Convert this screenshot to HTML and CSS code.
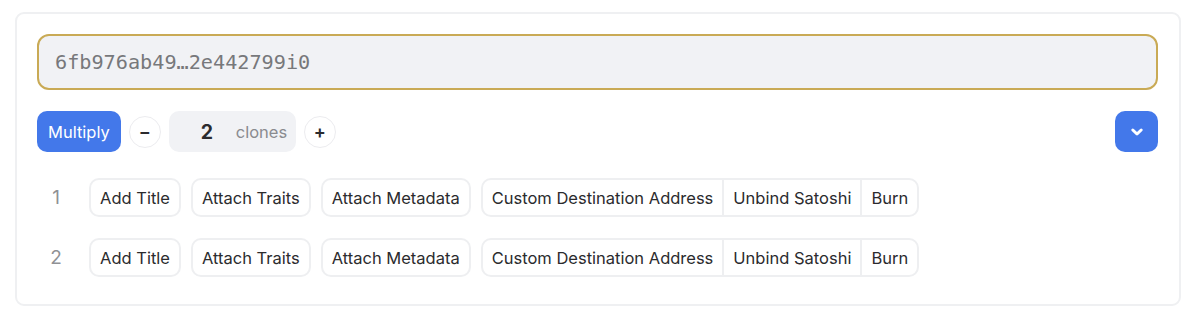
FILE: index.html
```html
<!DOCTYPE html>
<html lang="en">
<head>
    <meta charset="UTF-8">
    <meta name="viewport" content="width=device-width, initial-scale=1.0">
    <title>Multiply</title>
    <link rel="stylesheet" href="styles.css">
</head>
<body>
    <div class="card">
        <div class="id-input">6fb976ab49…2e442799i0</div>

        <div class="toolbar">
            <button class="btn-primary">Multiply</button>
            <button class="round-btn">&minus;</button>
            <div class="count-box">
                <span class="count">2</span>
                <span class="count-label">clones</span>
            </div>
            <button class="round-btn">+</button>
            <button class="btn-primary btn-toggle">
                <svg width="16" height="16" viewBox="0 0 16 16"><path d="M3.8 6 L8 10 L12.2 6" fill="none" stroke="#fff" stroke-width="3" stroke-linecap="round" stroke-linejoin="round"/></svg>
            </button>
        </div>

        <div class="clone-row">
            <span class="clone-num">1</span>
            <span class="chip">Add Title</span>
            <span class="chip">Attach Traits</span>
            <span class="chip">Attach Metadata</span>
            <span class="chip-group">
                <span class="chip-part">Custom Destination Address</span>
                <span class="chip-part">Unbind Satoshi</span>
                <span class="chip-part">Burn</span>
            </span>
        </div>

        <div class="clone-row">
            <span class="clone-num">2</span>
            <span class="chip">Add Title</span>
            <span class="chip">Attach Traits</span>
            <span class="chip">Attach Metadata</span>
            <span class="chip-group">
                <span class="chip-part">Custom Destination Address</span>
                <span class="chip-part">Unbind Satoshi</span>
                <span class="chip-part">Burn</span>
            </span>
        </div>
    </div>
</body>
</html>
```

FILE: styles.css
```css
body {
    margin: 0;
    background: #fff;
    font-family: Inter, "Noto Sans", sans-serif;
    color: #2b2b2e;
}
.card {
    margin: 12px 19px 0 15px;
    border: 2px solid #eff0f2;
    border-radius: 9px;
    padding: 20px 21px 27px 20px;
}
.id-input {
    height: 52px;
    border: 2px solid #c9aa55;
    border-radius: 12px;
    background: #f1f2f5;
    font-family: "DejaVu Sans Mono", monospace;
    font-size: 20.2px;
    color: #77787b;
    line-height: 52px;
    padding-left: 16px;
}
.toolbar {
    display: flex;
    align-items: center;
    gap: 8px;
    margin-top: 21px;
}
.btn-primary {
    height: 41px;
    padding: 0 11px;
    border: none;
    border-radius: 10px;
    background: #4378ea;
    color: #fff;
    font-family: Inter, sans-serif;
    font-size: 16.5px;
    cursor: pointer;
}
.btn-toggle {
    margin-left: auto;
    width: 43px;
    padding: 0;
    display: flex;
    align-items: center;
    justify-content: center;
}
.round-btn {
    width: 32px;
    height: 32px;
    border-radius: 50%;
    border: 1px solid #ececef;
    background: #fff;
    color: #2b2b2e;
    font-family: Inter, sans-serif;
    font-size: 18px;
    font-weight: 600;
    padding: 0;
    line-height: 28px;
}
.count-box {
    width: 127px;
    height: 41px;
    box-sizing: border-box;
    border-radius: 10px;
    background: #f1f2f5;
    display: flex;
    align-items: center;
    padding-left: 32px;
}
.count {
    font-size: 19.5px;
    font-weight: 700;
    width: 35px;
}
.count-label {
    font-size: 16.5px;
    color: #8a8b8f;
}
.clone-row {
    display: flex;
    align-items: center;
    gap: 10px;
    margin-top: 26px;
}
.clone-row + .clone-row {
    margin-top: 21px;
}
.clone-num {
    width: 38px;
    margin-right: 4px;
    text-align: center;
    font-size: 19px;
    color: #909195;
}
.chip {
    height: 39px;
    box-sizing: border-box;
    border: 2px solid #eeeff1;
    border-radius: 10px;
    padding: 0 9px;
    display: flex;
    align-items: center;
    font-size: 16.5px;
}
.chip-group {
    display: flex;
    height: 39px;
    box-sizing: border-box;
    border: 2px solid #eeeff1;
    border-radius: 10px;
}
.chip-part {
    display: flex;
    align-items: center;
    padding: 0 9px;
    font-size: 16.5px;
}
.chip-part + .chip-part {
    border-left: 2px solid #eeeff1;
}
```
